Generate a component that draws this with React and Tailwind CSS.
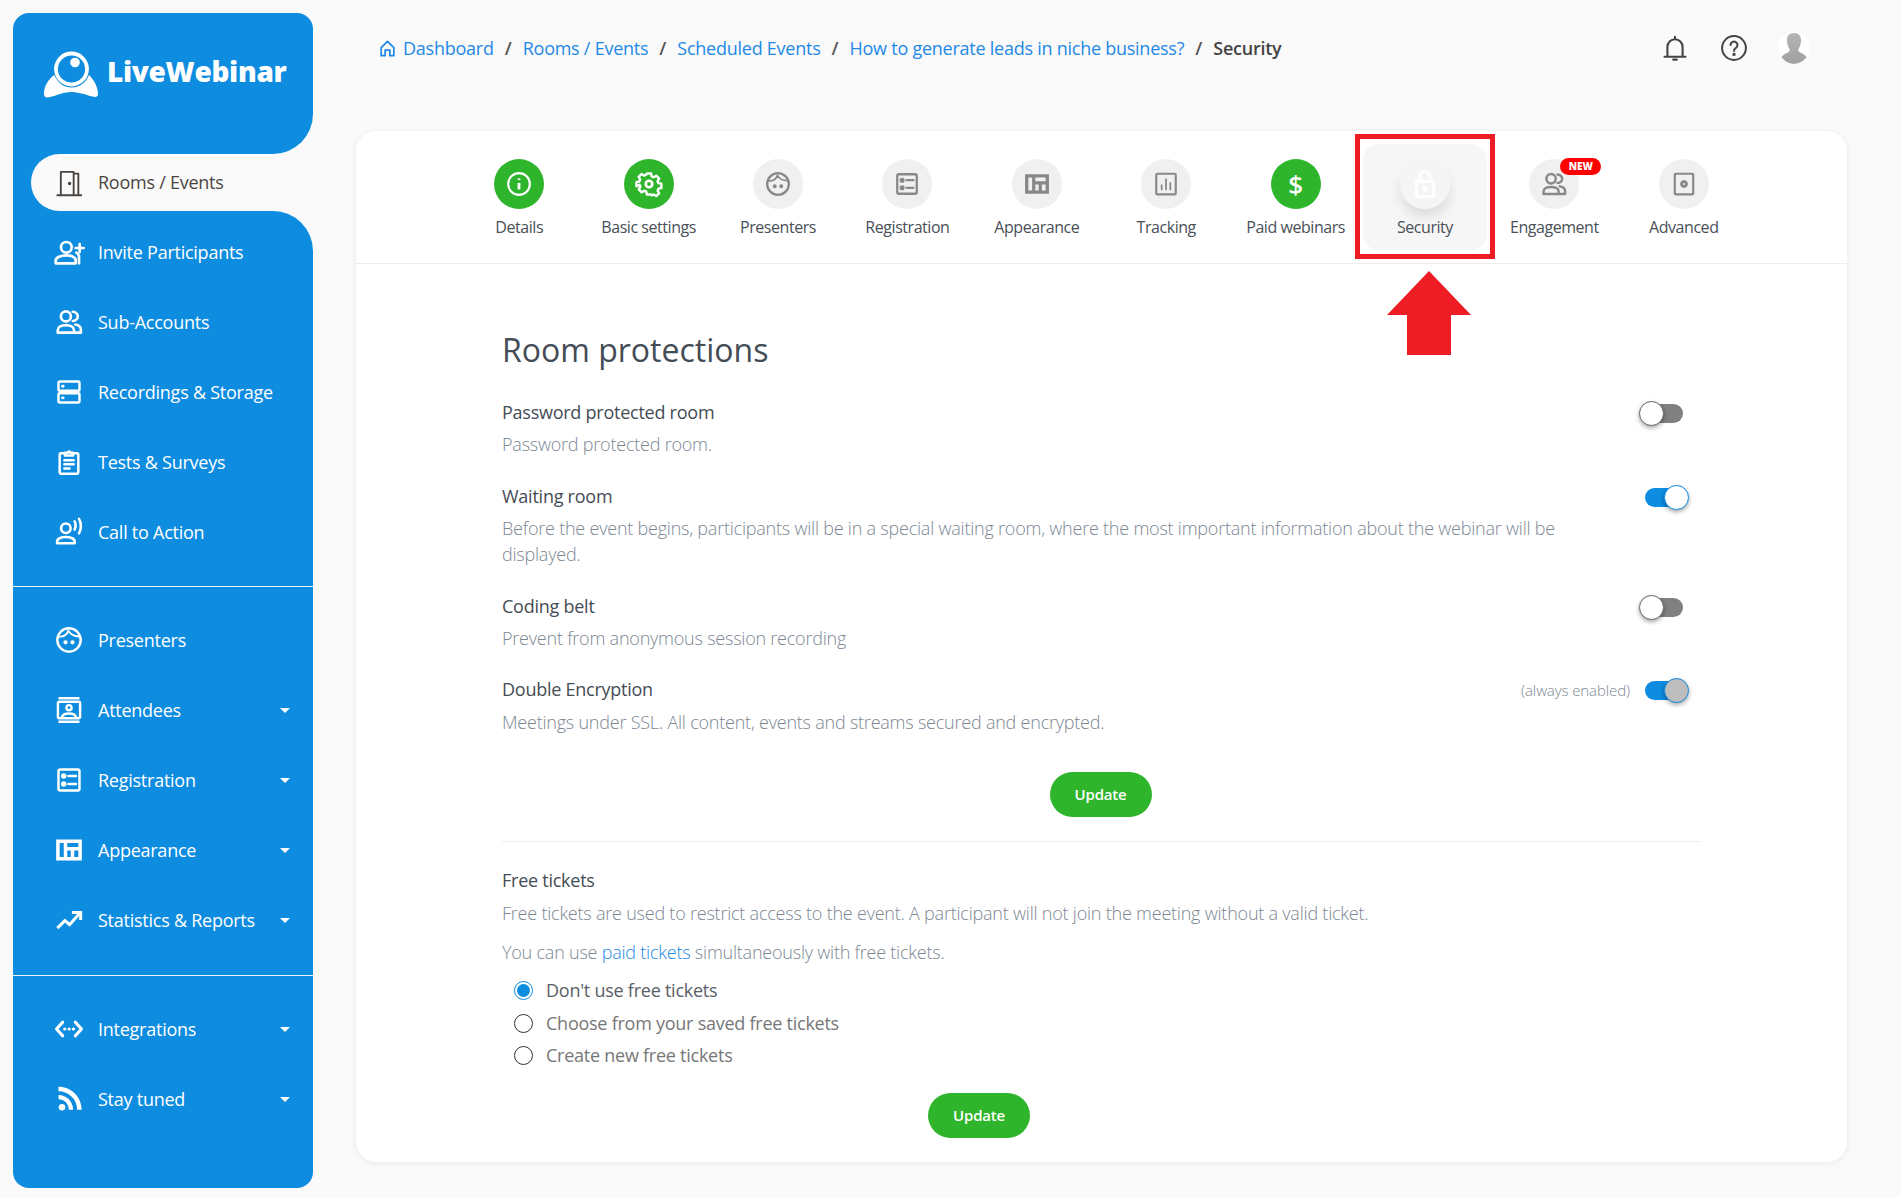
import React from "react";

const S = ({ size = 28, children, sw = 2 }) => (
  <svg width={size} height={size} viewBox="0 0 24 24" fill="none" stroke="currentColor" strokeWidth={sw} strokeLinecap="round" strokeLinejoin="round" className="shrink-0">{children}</svg>
);

const Door = () => <S sw={1.6}><path d="M2 22.5h20.5M5 22.5V2.5h11v20M16 4h4v18.5" /><circle cx="12.5" cy="12.5" r=".7" fill="currentColor" /></S>;
const InviteIcon = () => <S size={32} sw={2}><circle cx="10" cy="8.5" r="4" /><path d="M2 20.5v-2c0-2.5 4-4 8-4s6 1 7 3v3zM20 6v6M17 9h6M17.5 12.5c1 .5 1.5 1 2 2.5v5.500" /></S>;
const UsersIcon = ({ size = 30 }) => <S size={size} sw={2.1}><circle cx="9.500" cy="7.500" r="4" /><path d="M3 20.500v-2c0-2.500 3-4 6.500-4s6.500 1.500 6.500 4v2zM15 3.800c2.500.2 4 2 4 3.700s-1.500 3.500-4 3.700M17 14c3 .5 4.500 2 4.500 4v2.500H17" /></S>;
const Storage = () => <S sw={2.1}><rect x="3" y="3" width="18" height="8" rx="1" /><rect x="3" y="13" width="18" height="8" rx="1" /><path d="M6.500 7h.5M6.500 17h.5" strokeWidth="2.500" /></S>;
const Clip = () => <S sw={2.1}><path d="M8.500 4.500H5a1 1 0 0 0-1 1V21a1 1 0 0 0 1 1h14a1 1 0 0 0 1-1V5.500a1 1 0 0 0-1-1h-3.500" /><path d="M8.500 6.500v-2.500h2.500a1 1 0 0 1 2 0h2.500v2.500zM8 10.500h8M8 14h8M8 17.500h4.500" /></S>;
const CTA = () => <S size={30} sw={2.1}><circle cx="9.500" cy="9" r="3.800" /><path d="M2.500 21v-1.500c0-2 3-3.500 7-3.500s7 1.500 7 3.500V21zM16.500 3.500c1 1.500 1 5 0 6.500M20 1.500c2 3 2 8.500 0 11.500" /></S>;
const Face = ({ size = 28 }) => <S size={size} sw={2.1}><circle cx="12" cy="12" r="10" /><path d="M3 9c4 .5 7-1 8.500-5 1 2.500 4.500 5 9.500 5" strokeWidth="1.600" /><circle cx="9" cy="14" r=".8" fill="currentColor" /><circle cx="15" cy="14" r=".8" fill="currentColor" /></S>;
const Attend = () => <S sw={2.1}><rect x="2.500" y="5" width="19" height="14" rx="1" /><path d="M3 2h18M3 22h18" strokeLinecap="butt" /><circle cx="12" cy="10" r="2.200" /><path d="M6 18c.5-2 3-3 6-3s5.500 1 6 3" /></S>;
const RegIcon = ({ size = 28 }) => <S size={size} sw={2.1}><rect x="3" y="3" width="18" height="18" rx="1.500" /><path d="M11.500 8.500H18M11.500 15.500H18" /><circle cx="7.500" cy="8.500" r="1.300" fill="currentColor" /><circle cx="7.500" cy="15.500" r="1.300" fill="currentColor" /></S>;
const Layout = ({ size = 28 }) => <S size={size} sw={3}><path d="M2.500 4.500h19v15h-19zM9 4.500v15M9 11h12.500M15 11v8.500" strokeLinejoin="miter" strokeLinecap="butt" /></S>;
const Trend = () => <S sw={2.600}><path d="M2 19l6.500-6.500 4 3.500L21 6.500M14.500 5.500H22V12" strokeLinecap="butt" strokeLinejoin="miter" /></S>;
const Integr = () => <S size={30} sw={2.400}><path d="M7 6.500l-5 5.500 5 5.500M17 6.500l5 5.500-5 5.500" /><path d="M8.500 12h.2M12 12h.2M15.500 12h.2" strokeWidth="2.400" /></S>;
const Rss = () => <svg width="28" height="28" viewBox="0 0 24 24" className="shrink-0" fill="currentColor"><circle cx="6" cy="19" r="2.800" /><path d="M3 8.500v3.700c5 0 8.800 4 8.800 9h3.700C15.500 14 10 8.500 3 8.500zM3 1.500v3.800c9 0 16 7 16 15.900h3.800C22.800 10.200 14 1.500 3 1.500z" /></svg>;
const Caret = () => <span className="w-0 h-0 border-x-[5px] border-x-transparent border-t-[5px] border-t-white" />;

const Info = () => <S size={26} sw={2}><circle cx="12" cy="12" r="10" /><path d="M12 11v6" strokeWidth="2.600" strokeLinecap="butt" /><path d="M12 6.800v1.400" strokeWidth="2.600" strokeLinecap="butt" /></S>;
const Gear = () => (
  <svg width="28" height="28" viewBox="0 0 24 24" fill="none" stroke="#fff" strokeWidth="2.300" strokeLinejoin="round" className="shrink-0">
    <path d="M10 2h4l.6 2.800 1.900.8 2.400-1.500 2.800 2.800-1.500 2.400.8 1.900 2.800.6v4l-2.800.6-.8 1.900 1.500 2.400-2.800 2.800-2.400-1.500-1.900.8L14 22h-4l-.6-2.800-1.900-.8-2.400 1.500-2.800-2.800 1.500-2.400-.8-1.900L0 14.200v-4l2.800-.6.8-1.900L2.100 5.300l2.800-2.800 2.400 1.500 1.900-.8z" transform="translate(1.200 1.200) scale(.9)" />
    <circle cx="12" cy="12" r="2.800" />
  </svg>
);
const Track = () => <S size={26} sw={2}><rect x="3" y="2.500" width="18" height="19" rx="1" /><path d="M8 17v-4M12 17V7.500M16 17v-6" strokeWidth="1.600" /></S>;
const Dollar = () => <span className="text-white text-[26px] font-semibold leading-none">$</span>;
const Lock = () => <svg width="30" height="30" viewBox="0 0 24 24" fill="none" stroke="#fff" strokeWidth="2.400"><rect x="5" y="10" width="14" height="12" rx="1" /><path d="M8 10V6a4 4 0 0 1 8 0v4" /><circle cx="12" cy="16" r="1" fill="#fff" /></svg>;
const Adv = () => <S size={26} sw={2}><rect x="3.500" y="2.500" width="17" height="19" rx="1" /><circle cx="12" cy="12" r="2.800" fill="currentColor" strokeWidth="1.600" strokeDasharray="2 1" /><circle cx="12" cy="12" r=".9" fill="#f0f0f0" stroke="none" /></S>;

const Bell = () => <svg width="28" height="28" viewBox="0 0 24 24" fill="none" stroke="#444" strokeWidth="1.800" strokeLinecap="round"><path d="M3 19.500h18M5.500 19.500V11a6.500 6.500 0 0 1 13 0v8.500M12 2.500v2M10.500 22h3" /></svg>;
const Help = () => <svg width="28" height="28" viewBox="0 0 24 24" fill="none" stroke="#444" strokeWidth="1.700" strokeLinecap="round"><circle cx="12" cy="12" r="10.200" /><path d="M9 9.500a3 3 0 1 1 4.500 2.600c-1 .6-1.500 1.200-1.500 2.400" /><circle cx="12" cy="17.500" r=".6" fill="#444" /></svg>;
const Avatar = () => (
  <svg width="32" height="32" viewBox="0 0 32 32">
    <defs><linearGradient id="ag" x1="0" y1="0" x2="0" y2="1"><stop offset="0" stopColor="#b5b5b5" /><stop offset="1" stopColor="#a0a0a0" /></linearGradient></defs>
    <clipPath id="ac"><circle cx="16" cy="16" r="16" /></clipPath>
    <circle cx="16" cy="16" r="16" fill="#fff" />
    <path clipPath="url(#ac)" d="M16 1c-5 0-7 3-7 7 0 3 .5 6 2 8 1 1.500 1 3-.5 4-2 1.300-5 2-7 5 2.500 4 7.500 7 12.500 7s10-3 12.500-7c-2-3-5-3.700-7-5-1.500-1-1.500-2.500-.5-4 1.500-2 2-5 2-8 0-4-2-7-7-7z" fill="url(#ag)" />
  </svg>
);
const HomeI = () => <svg width="19" height="19" viewBox="0 0 24 24" fill="none" stroke="#2389e6" strokeWidth="2.200" strokeLinejoin="round"><path d="M4 11l8-8 8 8v10h-5v-7H9v7H4z" /></svg>;

const Logo = () => (
  <svg width="54" height="48" viewBox="0 0 54 48" className="shrink-0">
    <circle cx="27.500" cy="19" r="15.500" fill="none" stroke="#fff" strokeWidth="3.800" />
    <circle cx="31" cy="12.500" r="4.800" fill="#fff" />
    <path d="M0 44C0 36 4 30 10 25 14 33 20 37.500 27.500 37.500 35 37.500 42 33 45 25 50 30 54 37 54 44 54 48 50 47 46 46 38 43 31 42 27 42 20 42 14 45 6 47 2 48 0 47 0 44Z" fill="#fff" />
  </svg>
);

const NavRow = ({ icon, label, caret }) => (
  <div className="h-[70px] flex items-center text-white">
    <span className="w-[85px] pl-[27px] flex justify-center items-center h-full shrink-0">{icon}</span>
    <span className="text-[18px] tracking-[-0.25px] flex-1">{label}</span>
    {caret && <span className="mr-[23px] flex"><Caret /></span>}
  </div>
);

const Tab = ({ icon, label, state, badge }) => (
  <div className="w-[129.4px] px-[3px]">
    <div className={`h-[106px] pt-[15px] flex flex-col items-center rounded-2xl ${state === "sel" ? "bg-[#f6f6f6]" : ""}`}>
      <div className={`relative w-[50px] h-[50px] rounded-full flex items-center justify-center ${state === "done" ? "bg-[#2fb52c] text-white" : state === "sel" ? "bg-[#f5f5f5] shadow-[0_8px_12px_rgba(0,0,0,0.1)]" : "bg-[#f0f0f0] text-[#888]"}`}>
        {icon}
        {badge && <span className="absolute left-[31px] top-[-1px] w-[41px] h-[17px] rounded-full bg-[#ff0000] text-white text-[10px] font-extrabold flex items-center justify-center">NEW</span>}
      </div>
      <div className="mt-[7px] text-[16px] tracking-[-0.45px] leading-[22px] text-[#4a5058] whitespace-nowrap">{label}</div>
    </div>
  </div>
);

const Toggle = ({ on, disabled }) => (
  <div className="relative w-[38px] h-[19px] shrink-0">
    <div className={`w-full h-full rounded-full ${on ? "bg-[#0d8ce0]" : "bg-[#808080]"}`} />
    <div className={`absolute top-[-3px] w-[25px] h-[25px] rounded-full border shadow-[0_2px_4px_rgba(0,0,0,0.35)] ${on ? "right-[-6px] border-[#0d8ce0]" : "left-[-6px] border-[#666]"} ${disabled ? "bg-[#bdbdbd]" : "bg-white"}`} />
  </div>
);

const SecRow = ({ label, desc, on, disabled, note, cls, labelCls = "mb-[6px]" }) => (
  <div className={`flex ${cls}`}>
    <div className="flex-1 min-w-0">
      <div className={`h-[26px] leading-[26px] text-[18px] tracking-[-0.25px] text-[#444c55] ${labelCls}`}>{label}</div>
      <div className="text-[18px] tracking-[-0.22px] leading-[26px] font-light text-[#7c8793] max-w-[1060px]">{desc}</div>
    </div>
    <div className="flex items-center self-start h-[26px] mt-[1px] mr-[18px] ml-[20px]">
      {note && <span className="text-[15px] tracking-[-0.1px] font-light text-[#7c8793] mr-[15px] whitespace-nowrap">{note}</span>}
      <Toggle on={on} disabled={disabled} />
    </div>
  </div>
);

const Radio = ({ checked, label }) => (
  <div className="flex items-center h-[27px] ml-[12px]">
    <span className={`w-[19px] h-[19px] rounded-full border flex items-center justify-center shrink-0 ${checked ? "border-[#0d8ce0]" : "border-[#333]"}`}>
      {checked && <span className="w-[13px] h-[13px] rounded-full bg-[#0d8ce0]" />}
    </span>
    <span className={`ml-[13px] text-[18px] tracking-[-0.25px] ${checked ? "text-[#5a6067]" : "text-[#777]"}`}>{label}</span>
  </div>
);

const Update = ({ cls }) => (
  <button className={`w-[102px] h-[45px] rounded-full bg-[#2fb52c] text-white text-[15px] tracking-[-0.2px] font-semibold ${cls}`}>Update</button>
);

const Sep = () => <span className="mx-[11px] text-[#555] text-[18px] font-semibold">/</span>;
const Crumb = ({ children }) => <span className="text-[#2389e6] text-[18px] tracking-[-0.25px]">{children}</span>;

export default function App() {
  return (
    <div className="flex min-h-screen w-full bg-[#fafafa] font-['Open_Sans',sans-serif]">
      <aside className="w-[300px] shrink-0 ml-[13px] mt-[13px] mb-[9px] flex flex-col">
        <div className="h-[141px] bg-[#0d8ce0] rounded-t-2xl rounded-br-[40px] pt-[37px] pl-[31px]">
          <div className="flex items-start gap-[9px]">
            <Logo />
            <span className="text-white text-[28px] font-extrabold leading-[38px] tracking-[-0.3px] mt-[2px]">LiveWebinar</span>
          </div>
        </div>
        <div className="h-[57px] bg-[#0d8ce0]">
          <div className="ml-[18px] h-full bg-[#fafafa] rounded-l-full flex items-center text-[#4a4541]">
            <span className="w-[67px] pl-[9px] flex justify-center shrink-0"><Door /></span>
            <span className="text-[18px] tracking-[-0.25px]">Rooms / Events</span>
          </div>
        </div>
        <div className="flex-1 bg-[#0d8ce0] rounded-tr-[40px] rounded-b-2xl pt-[6px]">
          <NavRow icon={<InviteIcon />} label="Invite Participants" />
          <NavRow icon={<UsersIcon />} label="Sub-Accounts" />
          <NavRow icon={<Storage />} label="Recordings & Storage" />
          <NavRow icon={<Clip />} label="Tests & Surveys" />
          <NavRow icon={<CTA />} label="Call to Action" />
          <div className="h-px bg-white/90 mt-[19px] mb-[18px]" />
          <NavRow icon={<Face />} label="Presenters" />
          <NavRow icon={<Attend />} label="Attendees" caret />
          <NavRow icon={<RegIcon />} label="Registration" caret />
          <NavRow icon={<Layout />} label="Appearance" caret />
          <NavRow icon={<Trend />} label="Statistics & Reports" caret />
          <div className="h-px bg-white/90 mt-[20px] mb-[18px]" />
          <NavRow icon={<Integr />} label="Integrations" caret />
          <NavRow icon={<Rss />} label="Stay tuned" caret />
        </div>
      </aside>

      <main className="flex-1 pl-[43px] pr-[54px] min-w-0">
        <header className="h-[131px] flex items-start pt-[35px]">
          <div className="flex items-center h-[26px] flex-1 pl-[22px]">
            <span className="mr-[6px] flex"><HomeI /></span>
            <Crumb>Dashboard</Crumb><Sep />
            <Crumb>Rooms / Events</Crumb><Sep />
            <Crumb>Scheduled Events</Crumb><Sep />
            <Crumb>How to generate leads in niche business?</Crumb><Sep />
            <span className="text-[18px] tracking-[-0.25px] font-semibold text-[#444]">Security</span>
          </div>
          <div className="flex items-center h-[26px] mr-[37px] gap-[31px]">
            <Bell /><Help /><span className="ml-[-1px] flex"><Avatar /></span>
          </div>
        </header>

        <section className="relative w-[1491px] bg-white rounded-[20px] shadow-[0_1px_6px_rgba(0,0,0,0.08)] h-[1031px]">
          <div className="h-[133px] border-b border-[#eeeeee] flex justify-center pt-[13px]">
            <Tab state="done" icon={<Info />} label="Details" />
            <Tab state="done" icon={<Gear />} label="Basic settings" />
            <Tab icon={<Face size={26} />} label="Presenters" />
            <Tab icon={<RegIcon size={26} />} label="Registration" />
            <Tab icon={<Layout size={26} />} label="Appearance" />
            <Tab icon={<Track />} label="Tracking" />
            <Tab state="done" icon={<Dollar />} label="Paid webinars" />
            <Tab state="sel" icon={<Lock />} label="Security" />
            <Tab icon={<UsersIcon size={28} />} label="Engagement" badge />
            <Tab icon={<Adv />} label="Advanced" />
          </div>

          <div className="px-[146px] pt-[66px]">
            <h1 className="text-[32px] leading-[40px] text-[#444c55] mb-[29px]">Room protections</h1>
            <SecRow cls="mb-[26px]" label="Password protected room" desc="Password protected room." />
            <SecRow cls="mb-[26px]" on label="Waiting room" desc="Before the event begins, participants will be in a special waiting room, where the most important information about the webinar will be displayed." />
            <SecRow cls="mb-[25px]" label="Coding belt" desc="Prevent from anonymous session recording" />
            <SecRow labelCls="mb-[7px]" on disabled note="(always enabled)" label="Double Encryption" desc="Meetings under SSL. All content, events and streams secured and encrypted." />
            <div className="flex justify-center mt-[37px] pr-[2px]"><Update /></div>
            <hr className="mt-[24px] border-t border-[#eeeeee]" />
            <div className="h-[26px] leading-[26px] text-[18px] tracking-[-0.25px] text-[#444c55] mt-[25px]">Free tickets</div>
            <p className="text-[18px] tracking-[-0.22px] leading-[26px] font-light text-[#7c8793] mt-[7px]">Free tickets are used to restrict access to the event. A participant will not join the meeting without a valid ticket.</p>
            <p className="text-[18px] tracking-[-0.22px] leading-[26px] font-light text-[#7c8793] mt-[13px]">You can use <span className="text-[#2389e6]">paid tickets</span> simultaneously with free tickets.</p>
            <div className="mt-[12px] flex flex-col gap-[5.5px]">
              <Radio checked label="Don't use free tickets" />
              <Radio label="Choose from your saved free tickets" />
              <Radio label="Create new free tickets" />
            </div>
            <Update cls="ml-[426px] mt-[24px] block" />
          </div>

          <div className="absolute left-[999px] top-[3px] w-[140px] h-[125px] border-[5px] border-[#ee1c25]" />
          <svg className="absolute left-[1031px] top-[140px]" width="84" height="84" viewBox="0 0 84 84">
            <path d="M42 0 84 44H64V84H20V44H0Z" fill="#ee1c25" />
          </svg>
        </section>
      </main>
    </div>
  );
}
